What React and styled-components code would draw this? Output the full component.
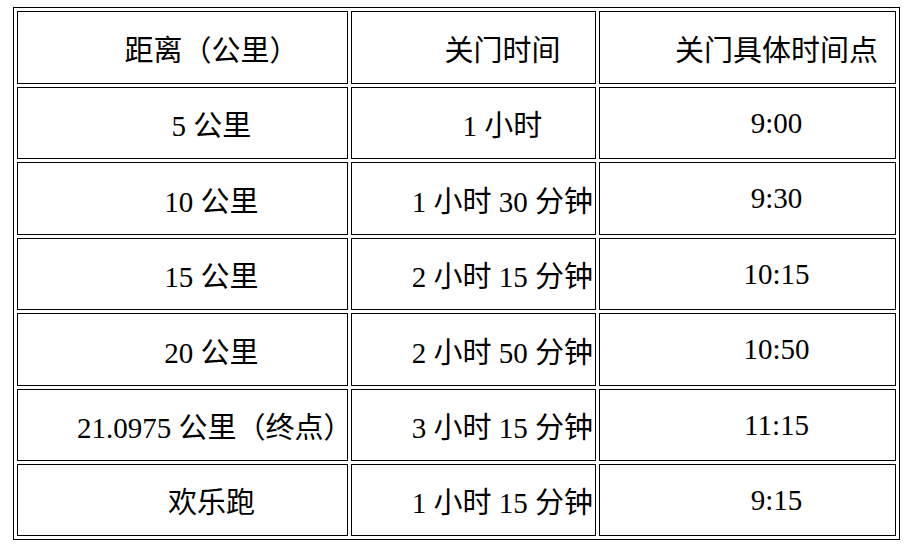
import React from 'react'
import styled, { createGlobalStyle } from 'styled-components'

const GlobalStyle = createGlobalStyle`
  html, body {
    margin: 0;
    padding: 0;
    background: #ffffff;
  }
`

const rows = [
  ['5 公里', '1 小时', '9:00'],
  ['10 公里', '1 小时 30 分钟', '9:30'],
  ['15 公里', '2 小时 15 分钟', '10:15'],
  ['20 公里', '2 小时 50 分钟', '10:50'],
  ['21.0975 公里（终点）', '3 小时 15 分钟', '11:15'],
  ['欢乐跑', '1 小时 15 分钟', '9:15'],
]

const rowHeights = [73, 72, 73, 72, 73, 72, 72]

export default function App() {
  return (
    <Page>
      <GlobalStyle />
      <Table>
        <colgroup>
          <col style={{ width: 331 }} />
          <col style={{ width: 245 }} />
          <col style={{ width: 297 }} />
        </colgroup>
        <tbody>
          <Row $h={rowHeights[0]}>
            <Cell>距离（公里）</Cell>
            <Cell>关门时间</Cell>
            <Cell>关门具体时间点</Cell>
          </Row>
          {rows.map((r, i) => (
            <Row key={i} $h={rowHeights[i + 1]}>
              {r.map((t, j) => (
                <Cell key={j}>{t}</Cell>
              ))}
            </Row>
          ))}
        </tbody>
      </Table>
    </Page>
  )
}

const Page = styled.div`
  padding: 7px 0 0 13px;
`

const Table = styled.table`
  table-layout: fixed;
  border: 1px solid #000;
  border-collapse: separate;
  border-spacing: 3px;
  width: 887px;
  font-family: "Liberation Serif", "Noto Sans CJK SC", serif;
  font-size: 29px;
  color: #000;
`

const Row = styled.tr`
  height: ${p => p.$h}px;
`

const Cell = styled.td`
  border: 1px solid #000;
  padding: 1px;
  text-align: center;
  text-indent: 2em;
  vertical-align: middle;
  white-space: nowrap;
  box-sizing: border-box;
`
